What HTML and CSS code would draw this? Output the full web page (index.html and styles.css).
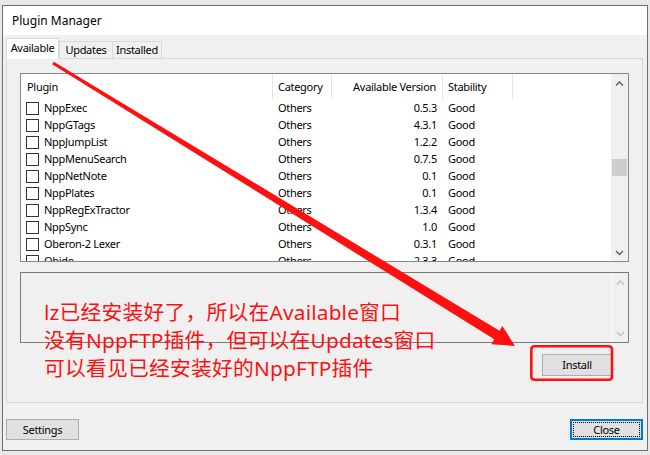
FILE: index.html
```html
<!DOCTYPE html>
<html>
<head>
<meta charset="utf-8">
<title>Plugin Manager</title>
<link rel="stylesheet" href="styles.css">
</head>
<body>
<div class="window">
  <div class="titlebar">Plugin Manager</div>
  <div class="client">
    <div class="tabs">
      <div class="tab active">Available</div>
      <div class="tab t-upd">Updates</div>
      <div class="tab t-ins">Installed</div>
    </div>
    <div class="panel">
      <div class="list">
        <div class="list-main">
          <div class="list-head">
            <div class="hcol c-plugin">Plugin</div>
            <div class="hcol c-cat">Category</div>
            <div class="hcol c-ver">Available Version</div>
            <div class="hcol c-stab">Stability</div>
          </div>
          <div class="row"><div class="c-plugin"><span class="chk"></span>NppExec</div><div class="c-cat">Others</div><div class="c-ver">0.5.3</div><div class="c-stab">Good</div></div>
          <div class="row"><div class="c-plugin"><span class="chk"></span>NppGTags</div><div class="c-cat">Others</div><div class="c-ver">4.3.1</div><div class="c-stab">Good</div></div>
          <div class="row"><div class="c-plugin"><span class="chk"></span>NppJumpList</div><div class="c-cat">Others</div><div class="c-ver">1.2.2</div><div class="c-stab">Good</div></div>
          <div class="row"><div class="c-plugin"><span class="chk"></span>NppMenuSearch</div><div class="c-cat">Others</div><div class="c-ver">0.7.5</div><div class="c-stab">Good</div></div>
          <div class="row"><div class="c-plugin"><span class="chk"></span>NppNetNote</div><div class="c-cat">Others</div><div class="c-ver">0.1</div><div class="c-stab">Good</div></div>
          <div class="row"><div class="c-plugin"><span class="chk"></span>NppPlates</div><div class="c-cat">Others</div><div class="c-ver">0.1</div><div class="c-stab">Good</div></div>
          <div class="row"><div class="c-plugin"><span class="chk"></span>NppRegExTractor</div><div class="c-cat">Others</div><div class="c-ver">1.3.4</div><div class="c-stab">Good</div></div>
          <div class="row"><div class="c-plugin"><span class="chk"></span>NppSync</div><div class="c-cat">Others</div><div class="c-ver">1.0</div><div class="c-stab">Good</div></div>
          <div class="row"><div class="c-plugin"><span class="chk"></span>Oberon-2 Lexer</div><div class="c-cat">Others</div><div class="c-ver">0.3.1</div><div class="c-stab">Good</div></div>
          <div class="row"><div class="c-plugin"><span class="chk"></span>Obide</div><div class="c-cat">Others</div><div class="c-ver">2.3.3</div><div class="c-stab">Good</div></div>
        </div>
        <div class="vscroll">
          <div class="sb-btn"><svg width="17" height="17" viewBox="0 0 17 17"><polyline points="5,11.5 8.5,8 12,11.5" /></svg></div>
          <div class="sb-track"><div class="sb-thumb"></div></div>
          <div class="sb-btn"><svg width="17" height="17" viewBox="0 0 17 17"><polyline points="5,7 8.5,10.5 12,7" /></svg></div>
        </div>
      </div>
      <div class="desc">
        <div class="desc-main"></div>
        <div class="vscroll disabled">
          <div class="sb-btn"><svg width="17" height="17" viewBox="0 0 17 17"><polyline points="5,11.5 8.5,8 12,11.5" /></svg></div>
          <div class="sb-track"></div>
          <div class="sb-btn"><svg width="17" height="17" viewBox="0 0 17 17"><polyline points="5,7 8.5,10.5 12,7" /></svg></div>
        </div>
      </div>
      <div class="install-row"><div class="btn install">Install</div></div>
    </div>
    <div class="footer">
      <div class="btn settings">Settings</div>
      <div class="btn close"><span class="focus">Close</span></div>
    </div>
  </div>
</div>

<svg class="annot" width="650" height="455" viewBox="0 0 650 455">
  <rect x="7.3" y="40.5" width="50.8" height="16" rx="2.5" class="red-box"/>
  <rect x="531.3" y="346.3" width="80.7" height="33.4" rx="3" class="red-box"/>
  <polygon class="red-fill" points="52.2,64.3 494.3,339.3 491.4,344.2 515,346 502.4,326.0 499.5,330.8 53.8,61.7"/>
</svg>
<div class="note">
  <div>lz已经安装好了，所以在Available窗口</div>
  <div>没有NppFTP插件，但可以在Updates窗口</div>
  <div>可以看见已经安装好的NppFTP插件</div>
</div>
</body>
</html>
```

FILE: styles.css
```css
html, body {
  margin: 0;
  padding: 0;
}
body {
  width: 650px;
  height: 455px;
  overflow: hidden;
  position: relative;
  background: #e8e8e8;
  font-family: "Noto Sans", "Segoe UI", sans-serif;
  font-size: 11px;
  letter-spacing: -0.3px;
  color: #000;
  padding: 5px 0 0 2px;
  box-sizing: border-box;
}
.window {
  width: 646px;
  height: 446px;
  box-sizing: border-box;
  border: 1px solid #6e6e6e;
  background: #f0f0f0;
  display: flex;
  flex-direction: column;
}
.titlebar {
  height: 29px;
  line-height: 29px;
  background: #fff;
  padding-left: 9px;
  font-size: 12px;
  letter-spacing: 0;
}
.client {
  flex: 1;
  padding: 3px 4px 0 3px;
  display: flex;
  flex-direction: column;
}
.tabs {
  display: flex;
  align-items: flex-end;
  height: 20px;
  position: relative;
  z-index: 1;
}
.tab {
  box-sizing: border-box;
  height: 17px;
  line-height: 16px;
  border: 1px solid #d9d9d9;
  border-bottom: none;
  background: #f0f0f0;
  text-align: center;
}
.tab.active {
  width: 53px;
  height: 21px;
  line-height: 18px;
  margin-bottom: -1px;
  background: #fff;
}
.t-upd { width: 54px; }
.t-ins { width: 50px; margin-left: -1px; }

.panel {
  height: 345px;
  box-sizing: border-box;
  border: 1px solid #d9d9d9;
  padding: 14px 0 0 13px;
  display: flex;
  flex-direction: column;
}
.list {
  width: 609px;
  height: 189px;
  box-sizing: border-box;
  border: 1px solid #828790;
  background: #fff;
  display: flex;
  overflow: hidden;
}
.list-main {
  flex: 1;
  overflow: hidden;
}
.list-head, .row {
  display: grid;
  grid-template-columns: 252px 59px 111px 70px;
  white-space: nowrap;
}
.list-head {
  height: 25px;
  line-height: 25px;
}
.hcol {
  border-right: 1px solid #e5e5e5;
}
.row {
  height: 17px;
  line-height: 18px;
}
.c-plugin { padding-left: 6px; }
.row .c-plugin { padding-left: 5px; display: flex; align-items: center; }
.c-cat { padding-left: 5px; }
.c-ver { padding-right: 6px; text-align: right; }
.c-stab { padding-left: 5px; }
.chk {
  width: 13px;
  height: 13px;
  box-sizing: border-box;
  border: 1px solid #333;
  background: #fff;
  margin-right: 5px;
  flex: none;
}
.vscroll {
  width: 17px;
  flex: none;
  background: #f0f0f0;
  display: flex;
  flex-direction: column;
}
.sb-btn {
  height: 17px;
}
.sb-btn svg {
  display: block;
}
.sb-btn polyline {
  fill: none;
  stroke: #606060;
  stroke-width: 1.5;
}
.sb-track {
  flex: 1;
}
.sb-thumb {
  margin: 68px 1px 0 1px;
  height: 17px;
  background: #cdcdcd;
}
.desc {
  margin-top: 10px;
  width: 609px;
  height: 71px;
  box-sizing: border-box;
  border: 1px solid #7a7a7a;
  background: #f0f0f0;
  display: flex;
}
.desc-main {
  flex: 1;
}
.vscroll.disabled {
  border-left: 1px solid #fbfbfb;
  width: 16px;
}
.vscroll.disabled polyline {
  stroke: #c2c2c2;
}
.install-row {
  width: 609px;
  margin-top: 11px;
  display: flex;
  justify-content: flex-end;
  padding-right: 17px;
  box-sizing: border-box;
}
.btn {
  box-sizing: border-box;
  height: 22px;
  line-height: 20px;
  border: 1px solid #adadad;
  background: #e1e1e1;
  text-align: center;
}
.install {
  width: 70px;
}
.footer {
  margin-top: 16px;
  display: flex;
  justify-content: space-between;
}
.settings {
  width: 73px;
  height: 21px;
  line-height: 19px;
}
.close {
  width: 73px;
  height: 21px;
  border: 2px solid #0078d7;
  padding: 1px;
  line-height: 13px;
}
.focus {
  display: block;
  height: 15px;
  box-sizing: border-box;
  border: 1px dotted #000;
}
.annot {
  position: absolute;
  left: 0;
  top: 0;
  pointer-events: none;
}
.red-box {
  fill: none;
  stroke: #ff1010;
  stroke-width: 2.6;
}
.red-fill {
  fill: #ff1010;
}
.note {
  position: absolute;
  left: 44px;
  top: 299px;
  font-family: "Noto Sans", "Noto Sans CJK SC", sans-serif;
  font-size: 20.8px;
  letter-spacing: 0.2px;
  line-height: 27.8px;
  color: #ff1010;
  white-space: nowrap;
}
```
